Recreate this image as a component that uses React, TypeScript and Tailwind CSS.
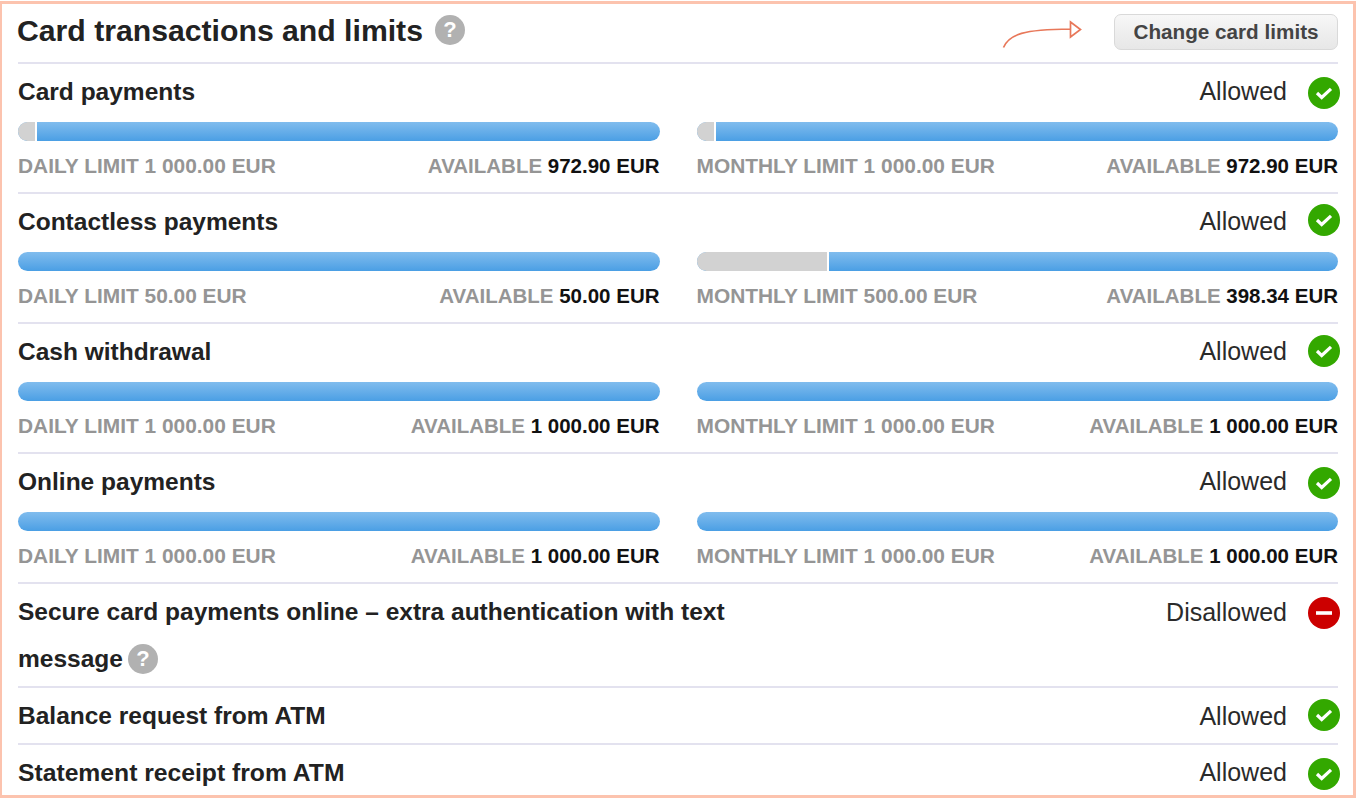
import React from 'react';

interface Limit {
  label: string;
  available: string;
  used: number;
}

interface Row {
  title: string;
  iconClass: string;
  daily: Limit;
  monthly: Limit;
}

const rows: Row[] = [
  {
    title: 'Card payments',
    iconClass: 'mt-[2px]',
    daily: { label: 'DAILY LIMIT 1 000.00 EUR', available: '972.90 EUR', used: 18 },
    monthly: { label: 'MONTHLY LIMIT 1 000.00 EUR', available: '972.90 EUR', used: 18 },
  },
  {
    title: 'Contactless payments',
    iconClass: 'mb-[4px]',
    daily: { label: 'DAILY LIMIT 50.00 EUR', available: '50.00 EUR', used: 0 },
    monthly: { label: 'MONTHLY LIMIT 500.00 EUR', available: '398.34 EUR', used: 131 },
  },
  {
    title: 'Cash withdrawal',
    iconClass: 'mb-[2px]',
    daily: { label: 'DAILY LIMIT 1 000.00 EUR', available: '1 000.00 EUR', used: 0 },
    monthly: { label: 'MONTHLY LIMIT 1 000.00 EUR', available: '1 000.00 EUR', used: 0 },
  },
  {
    title: 'Online payments',
    iconClass: 'mt-[2px]',
    daily: { label: 'DAILY LIMIT 1 000.00 EUR', available: '1 000.00 EUR', used: 0 },
    monthly: { label: 'MONTHLY LIMIT 1 000.00 EUR', available: '1 000.00 EUR', used: 0 },
  },
];

function HelpIcon() {
  return (
    <span className="flex h-[30px] w-[30px] shrink-0 items-center justify-center rounded-full bg-[#b1b1b1] text-[22px] font-bold leading-none text-white">
      ?
    </span>
  );
}

function Status({
  allowed = true,
  textClass = 'mb-[2px]',
  iconClass = '',
}: {
  allowed?: boolean;
  textClass?: string;
  iconClass?: string;
}) {
  return (
    <div className="flex h-8 items-center gap-[21px]">
      <span className={`text-[25px] leading-none text-[#2a2a2a] ${textClass}`}>
        {allowed ? 'Allowed' : 'Disallowed'}
      </span>
      <svg width="32" height="32" viewBox="0 0 32 32" className={`-mr-[2px] shrink-0 ${iconClass}`}>
        <circle cx="16" cy="16" r="16" fill={allowed ? '#33a800' : '#cc0000'} />
        {allowed ? (
          <path d="M9 16l4.7 4.5L23 11.8" fill="none" stroke="#fff" strokeWidth="3.2" />
        ) : (
          <rect x="8" y="14.2" width="16" height="3.6" fill="#fff" />
        )}
      </svg>
    </div>
  );
}

function LimitBar({ limit }: { limit: Limit }) {
  return (
    <div className="min-w-0 flex-1">
      <div className="flex h-[19px] overflow-hidden rounded-[9.5px] bg-gradient-to-b from-[#80bcee] to-[#4a9fe4]">
        {limit.used > 0 && (
          <div className="shrink-0 border-r-2 border-white bg-[#d2d2d2]" style={{ width: limit.used + 1 }} />
        )}
      </div>
      <div className="mt-[13px] flex items-center justify-between font-bold leading-[23px] text-[#959595]">
        <span className="text-[20.9px]">{limit.label}</span>
        <span className="text-[20.5px]">
          AVAILABLE <span className="text-[#111]">{limit.available}</span>
        </span>
      </div>
    </div>
  );
}

function App() {
  return (
    <div className="h-[798px] w-[1356px] bg-white pt-px font-['Liberation_Sans',Arial,sans-serif]">
      <div className="flex h-[797px] flex-col overflow-hidden border-[3px] border-l-2 border-[#fcc3ae] pl-4 pr-[15px]">
        <div className="flex h-[60px] shrink-0 items-center justify-between border-b-2 border-[#e3e2ef] pb-[5px]">
          <div className="flex items-center gap-3">
            <h1 className="-ml-px mt-[2px] text-[30.2px] font-bold leading-none text-[#222]">
              Card transactions and limits
            </h1>
            <HelpIcon />
          </div>
          <div className="mt-[3px] flex items-center gap-8">
            <svg width="80" height="28" viewBox="0 0 80 28" className="mt-1 shrink-0 text-[#e8785a]">
              <path
                d="M1.5 27.5C7 14 22 9.5 68 9M68.5 2l10 7.5-10 7.5z"
                fill="none"
                stroke="currentColor"
                strokeWidth="1.7"
              />
            </svg>
            <button className="h-9 w-[224px] rounded-[7px] border border-[#d9d9d9] bg-gradient-to-b from-[#f7f7f7] to-[#e7e7e7] text-[20.7px] font-bold text-[#444]">
              Change card limits
            </button>
          </div>
        </div>

        {rows.map((row) => (
          <div key={row.title} className="h-[130px] shrink-0 border-b-2 border-[#e3e2ef]">
            <div className="flex h-[58px] items-center justify-between pb-[2px]">
              <span className="text-[24.5px] font-bold leading-none text-[#222]">{row.title}</span>
              <Status iconClass={row.iconClass} />
            </div>
            <div className="flex gap-[37px]">
              <LimitBar limit={row.daily} />
              <LimitBar limit={row.monthly} />
            </div>
          </div>
        ))}

        <div className="flex h-[104px] shrink-0 items-start justify-between border-b-2 border-[#e3e2ef] pt-[13px]">
          <div className="w-[760px] text-[24.5px] font-bold leading-[47px] text-[#222]">
            <div className="-mt-[9px]">Secure card payments online – extra authentication with text</div>
            <div className="flex items-center gap-[5px]">
              message
              <HelpIcon />
            </div>
          </div>
          <Status allowed={false} />
        </div>

        <div className="flex h-[57px] shrink-0 items-center justify-between border-b-2 border-[#e3e2ef] pt-[2px]">
          <span className="text-[24.5px] font-bold leading-none text-[#222]">Balance request from ATM</span>
          <Status textClass="" iconClass="mb-[3px]" />
        </div>
        <div className="flex h-[52px] shrink-0 items-center justify-between pt-1">
          <span className="text-[24.7px] font-bold leading-none text-[#222]">Statement receipt from ATM</span>
          <Status iconClass="mt-[2px]" />
        </div>
      </div>
    </div>
  );
}

export default App;
